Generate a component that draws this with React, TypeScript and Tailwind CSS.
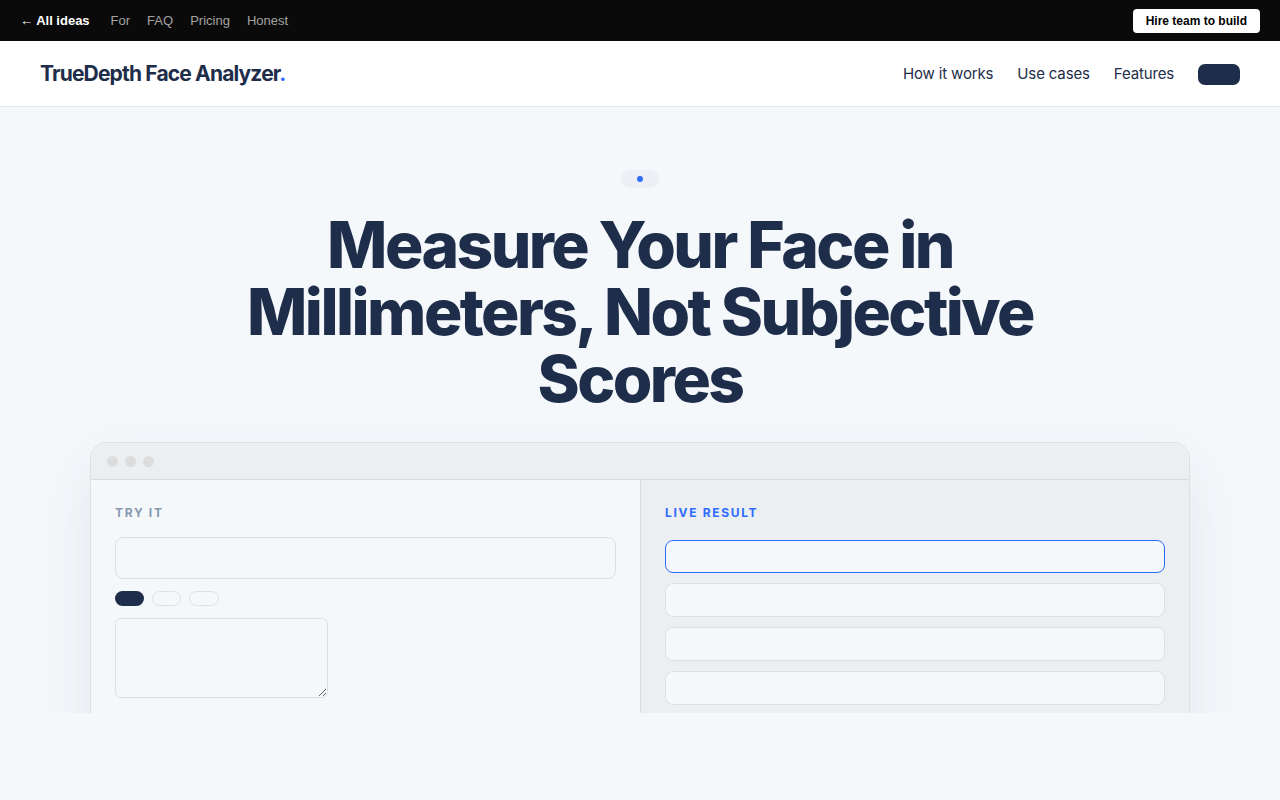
import React from "react";

const sans = { fontFamily: "Inter, 'Noto Sans', sans-serif" };

function TopBar() {
  return (
    <div
      className="h-[41px] bg-[#0a0a0a] flex items-center justify-between px-5 text-[13px]"
      style={{ fontFamily: "'Liberation Sans', Arial, sans-serif" }}
    >
      <div className="flex items-center gap-[17px]">
        <a className="text-white font-bold mr-[4px]">← All ideas</a>
        <a className="text-[#a3a3a3]">For</a>
        <a className="text-[#a3a3a3]">FAQ</a>
        <a className="text-[#a3a3a3]">Pricing</a>
        <a className="text-[#a3a3a3]">Honest</a>
      </div>
      <button className="bg-white text-black font-bold rounded-[4px] h-[24px] px-[13px] text-[12px]">
        Hire team to build
      </button>
    </div>
  );
}

function NavBar() {
  return (
    <nav
      className="h-[66px] bg-white border-b border-[#e3e8ee] flex items-center justify-between px-10"
      style={sans}
    >
      <div className="text-[21px] font-bold tracking-[-0.04em] text-[#1e2d4a]">
        TrueDepth Face Analyzer<span className="text-[#2f6bff]">.</span>
      </div>
      <div className="flex items-center gap-6 text-[15px] text-[#1e2d4a] tracking-[-0.01em] pt-[2px]">
        <a>How it works</a>
        <a>Use cases</a>
        <a>Features</a>
        <button className="w-[42px] h-[21px] rounded-[7px] bg-[#1e2d4a]" />
      </div>
    </nav>
  );
}

function WindowChrome() {
  return (
    <div className="h-[37px] bg-[#eceff2] border-b border-[#d9dde2] flex items-center gap-[7px] px-4">
      <span className="w-[11px] h-[11px] rounded-full bg-[#dcdcdc]" />
      <span className="w-[11px] h-[11px] rounded-full bg-[#dcdcdc]" />
      <span className="w-[11px] h-[11px] rounded-full bg-[#dcdcdc]" />
    </div>
  );
}

function TryPanel() {
  return (
    <div className="bg-[#f5f8fb] px-6 pt-6">
      <div className="text-[12px] font-bold tracking-[0.14em] text-[#8799b1]">TRY IT</div>
      <div className="mt-[15px] h-[42px] rounded-lg border border-[#dde1e6] bg-[#f5f8fb]" />
      <div className="mt-3 flex gap-2">
        <span className="w-[29px] h-[15px] rounded-full bg-[#1e2d4a]" />
        <span className="w-[29px] h-[15px] rounded-full border border-[#dde1e6]" />
        <span className="w-[30px] h-[15px] rounded-full border border-[#dde1e6]" />
      </div>
      <textarea className="mt-3 block w-[213px] h-[80px] rounded-md border border-[#dde1e6] bg-[#f5f8fb]" />
    </div>
  );
}

function ResultPanel() {
  const rows = [0, 1, 2];
  return (
    <div className="bg-[#eceff2] border-l border-[#d9dde2] px-6 pt-6">
      <div className="text-[12px] font-bold tracking-[0.14em] text-[#2f6bff]">LIVE RESULT</div>
      <div className="mt-[18px] flex flex-col gap-[10px]">
        <div className="h-[33px] rounded-lg border border-[#2f6bff] bg-[#f5f8fb]" />
        {rows.map((r) => (
          <div key={r} className="h-[34px] rounded-lg border border-[#dde1e6] bg-[#f5f8fb]" />
        ))}
      </div>
    </div>
  );
}

export default function App() {
  return (
    <div className="min-h-[800px] bg-[#f5f8fb]">
      <TopBar />
      <NavBar />
      <section className="h-[606px] overflow-hidden flex flex-col items-center pt-[63px]" style={sans}>
        <div className="shrink-0 w-[38px] h-[18px] rounded-full bg-[#eceff3] flex items-center justify-center">
          <span className="w-[6px] h-[6px] rounded-full bg-[#2f6bff]" />
        </div>
        <h1 className="shrink-0 mt-[23px] max-w-[860px] text-center text-[64px] leading-[67px] font-extrabold tracking-[-0.04em] text-[#1e2d4a]">
          Measure Your Face in Millimeters, Not Subjective Scores
        </h1>
        <div className="mt-[30px] w-[1100px] rounded-2xl border border-[#dde1e6] overflow-hidden shadow-[0_20px_60px_rgba(30,45,74,0.08)] shrink-0">
          <WindowChrome />
          <div className="grid grid-cols-2 h-[300px]">
            <TryPanel />
            <ResultPanel />
          </div>
        </div>
      </section>
    </div>
  );
}
